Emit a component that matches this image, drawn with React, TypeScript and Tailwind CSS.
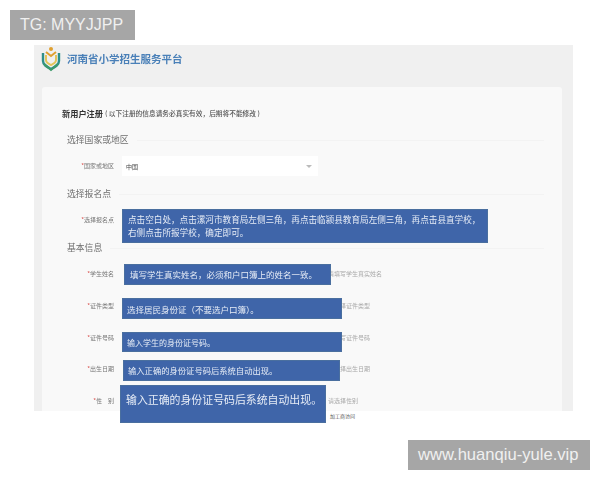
const cjk = "font-['Noto_Sans_CJK_SC','Liberation_Sans',sans-serif]";

function Logo() {
  return (
    <svg width="20" height="26" viewBox="0 0 20 26" fill="none">
      <circle cx="10" cy="3" r="2" fill="#e0a030" />
      <path d="M5 6 L10 10 L15 6" stroke="#e0a030" strokeWidth="2" fill="none" />
      <path d="M2 7 V15 C2 19 6 21 10 23 C14 21 18 19 18 15 V7" stroke="#2f8f8a" strokeWidth="2.4" fill="none" />
      <path d="M5 9 V14 C5 17 8 18 10 19 C12 18 15 17 15 14 V9" stroke="#e3c45a" strokeWidth="2" fill="none" />
      <path d="M3 18 L10 24 L17 18" stroke="#3d9a6a" strokeWidth="2" fill="none" />
    </svg>
  );
}

function Section({ title, className }: { title: string; className: string }) {
  return (
    <div className={`flex items-center h-[14px] pl-[25px] pr-[18px] ${className}`}>
      <span className="text-[8.8px] leading-[14px] text-[#6f6f6f] shrink-0">{title}</span>
      <div className="flex-1 h-px bg-[#f3f3f3] ml-2" />
    </div>
  );
}

function Row({ label, hint, hintClass, className, children }: { label: string; hint?: string; hintClass?: string; className: string; children?: React.ReactNode }) {
  return (
    <div className={`flex items-center h-5 ${className}`}>
      <div className="w-[72px] shrink-0 text-right text-[6px] leading-5 text-[#777]">
        <span className="text-[#d9534f]">*</span>
        {label}
      </div>
      <div className="ml-2 w-[196px] shrink-0 h-5">{children}</div>
      {hint && <span className={`text-[6px] leading-5 text-[#aaa] whitespace-nowrap ${hintClass}`}>{hint}</span>}
    </div>
  );
}

function Note({ className, text }: { className: string; text: React.ReactNode }) {
  return (
    <div className={`absolute bg-[#3f65a9] border border-[#4a6f9f] text-[#e6ecf6] overflow-hidden whitespace-nowrap blur-[0.3px] ${className}`}>
      {text}
    </div>
  );
}

export default function App() {
  return (
    <div className={`relative w-[600px] h-[480px] bg-white overflow-hidden ${cjk}`}>
      <div className="pt-[45px] pl-[34px]">
        <div className="w-[539px] h-[366px] bg-[#f0f0f0] overflow-hidden blur-[0.4px]">
          <div className="flex items-center h-[42px] pl-[7px] pb-[14px]">
            <Logo />
            <span className="ml-[6px] text-[10.5px] leading-[16px] font-bold text-[#4a80b8]">河南省小学招生服务平台</span>
          </div>
          <div className="ml-2 w-[520px] h-[340px] bg-[#f9f9f9] rounded-[3px] pt-[19px]">
            <div className="flex items-center h-[14px] pl-5">
              <span className="text-[8.2px] font-bold text-[#333]">新用户注册</span>
              <span className="ml-[2px] text-[6.7px] font-medium text-[#555]">( 以下注册的信息请务必真实有效，后期将不能修改 )</span>
            </div>
            <Section title="选择国家或地区" className="mt-[13px]" />
            <Row label="国家或地区" className="mt-[9px]">
              <div className="flex items-center justify-between h-5 bg-white pl-[4px] pr-[6px] text-[6px] text-[#444]">
                <span>中国</span>
                <span className="w-0 h-0 border-x-[3px] border-x-transparent border-t-[3px] border-t-[#bbb]" />
              </div>
            </Row>
            <Section title="选择报名点" className="mt-[11px]" />
            <Row label="选择报名点" className="mt-[9px]" />
            <Section title="基本信息" className="mt-[11px]" />
            <Row label="学生姓名" hint="请填写学生真实姓名" hintClass="ml-[10px]" className="mt-[9px]" />
            <Row label="证件类型" hint="择证件类型" hintClass="ml-[22px]" className="mt-3" />
            <Row label="证件号码" hint="写证件号码" hintClass="ml-[22px]" className="mt-3" />
            <Row label="出生日期" hint="择出生日期" hintClass="ml-[22px]" className="mt-[11px]" />
            <Row label="性　别" hint="请选择性别" hintClass="ml-[10px]" className="mt-3" />
          </div>
        </div>
      </div>

      <Note
        className="left-[122px] top-[209px] w-[366px] h-[34px] pl-[5px] pt-[3px] text-[8.6px] leading-[13px]"
        text={
          <>
            点击空白处，点击漯河市教育局左侧三角，再点击临颍县教育局左侧三角，再点击县直学校，
            <br />
            右侧点击所报学校，确定即可。
          </>
        }
      />
      <Note className="left-[124px] top-[264px] w-[207px] h-[21px] pl-[5px] text-[8.5px] leading-[19px]" text="填写学生真实姓名，必须和户口簿上的姓名一致。" />
      <Note className="left-[122px] top-[298px] w-[220px] h-[21px] pl-[4px] text-[8.5px] leading-[21px]" text="选择居民身份证（不要选户口簿）。" />
      <Note className="left-[122px] top-[332px] w-[220px] h-[20px] pl-[4px] text-[8px] leading-[19px]" text="输入学生的身份证号码。" />
      <Note className="left-[123px] top-[360px] w-[217px] h-[21px] pl-[4px] text-[8.3px] leading-[19px]" text="输入正确的身份证号码后系统自动出现。" />
      <Note className="left-[120px] top-[385px] w-[206px] h-[38px] pl-[5px] pt-[2px] text-[10.9px] leading-[22px]" text="输入正确的身份证号码后系统自动出现。" />

      <div className="absolute left-[330px] top-[413px] text-[5px] leading-[6px] text-[#555]">
        加工商访问
      </div>

      <div className="absolute left-[10px] top-[10px] w-[125px] h-[30px] bg-[#a6a6a6] text-[#f0f0f0] text-[16px] leading-[30px] pl-[10px] font-['Liberation_Sans',sans-serif]">
        TG: MYYJJPP
      </div>
      <div className="absolute left-[408px] top-[440px] w-[182px] h-[30px] bg-[#a6a6a6] text-[#f0f0f0] text-[16.6px] leading-[30px] pl-[10px] whitespace-nowrap font-['Liberation_Sans',sans-serif]">
        www.huanqiu-yule.vip
      </div>
    </div>
  );
}
